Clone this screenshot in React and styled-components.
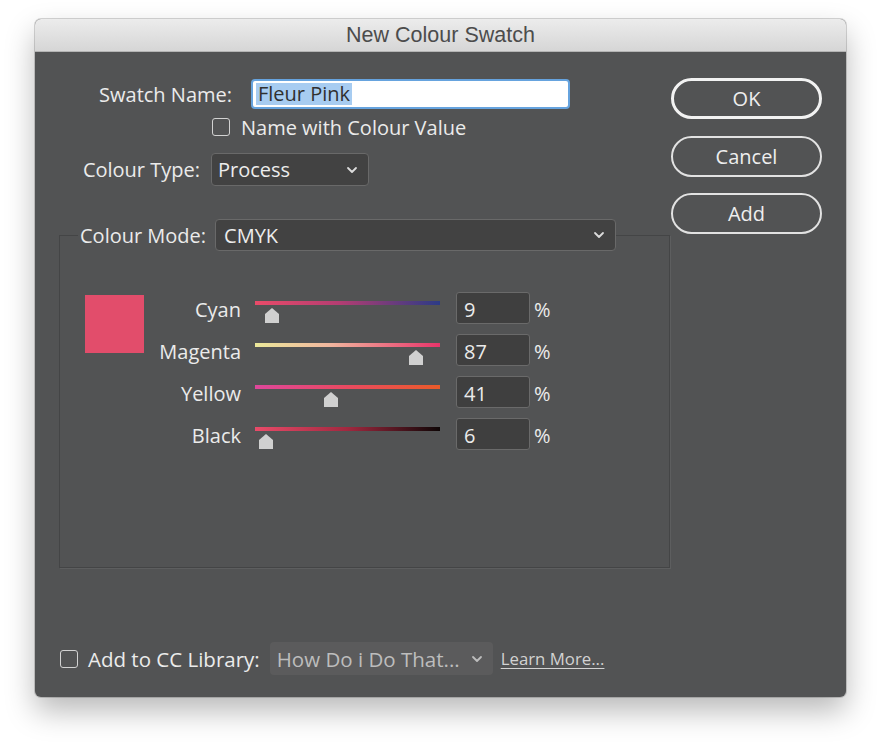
import React from 'react';
import styled, { createGlobalStyle } from 'styled-components';

const Global = createGlobalStyle`
  html, body { margin: 0; padding: 0; background: #ffffff; }
  body { font-family: "Open Sans", "DejaVu Sans", sans-serif; }
  * { box-sizing: border-box; }
`;

const Page = styled.div`
  width: 882px;
  height: 750px;
  padding: 19px 0 0 35px;
`;

const Window = styled.div`
  width: 811px;
  height: 678px;
  border-radius: 6px;
  overflow: hidden;
  display: flex;
  flex-direction: column;
  background: #525354;
  box-shadow: 0 0 0 1px rgba(0, 0, 0, 0.16), 0 14px 30px rgba(0, 0, 0, 0.28);
`;

const TitleBar = styled.div`
  height: 33px;
  flex: none;
  display: flex;
  align-items: center;
  justify-content: center;
  background: linear-gradient(#ececec, #d6d6d6);
  border-bottom: 1px solid #b4b4b4;
  font-family: "Liberation Sans", Arial, sans-serif;
  font-size: 21.5px;
  color: #4c4c4c;
`;

const Body = styled.div`
  flex: 1;
  display: grid;
  grid-template-columns: 636px 151px;
  grid-template-rows: auto auto 1fr auto;
  padding-right: 24px;
  color: #ebebeb;
  font-size: 20px;
`;

const TopForm = styled.div`
  grid-column: 1;
  grid-row: 1;
  padding-top: 27px;
  display: flex;
  flex-direction: column;
`;

const Row = styled.div`
  display: flex;
  align-items: center;
  gap: ${p => p.$gap || 0}px;
  margin-top: ${p => p.$mt || 0}px;
  padding-left: ${p => p.$pl || 0}px;
  height: ${p => p.$h}px;
`;

const Label = styled.span`
  width: ${p => p.$w}px;
  flex: none;
  text-align: right;
  white-space: nowrap;
`;

const TextField = styled.div`
  width: 319px;
  height: 30px;
  background: #ffffff;
  border: 2px solid #66a3de;
  border-radius: 4px;
  display: flex;
  align-items: center;
  padding-left: 3px;
  color: #303030;
`;

const Selection = styled.span`
  background: #a7ccf1;
  padding: 0 2px;
  line-height: 22px;
`;

const CheckBox = styled.span`
  width: 18px;
  height: 18px;
  flex: none;
  border: 1.5px solid #d2d2d2;
  border-radius: 3px;
`;

const Select = styled.div`
  width: ${p => p.$w}px;
  height: ${p => p.$h || 33}px;
  flex: none;
  display: flex;
  align-items: center;
  justify-content: space-between;
  padding: 0 10px 0 ${p => p.$pl || 6}px;
  background: ${p => (p.$disabled ? '#5b5b5c' : '#424242')};
  border: ${p => (p.$disabled ? 'none' : '1px solid #696969')};
  border-radius: 4px;
  color: ${p => (p.$disabled ? '#bdbdbd' : '#ececec')};
  white-space: nowrap;
  font-size: ${p => p.$fs || 20}px;
`;

const Chevron = ({ color = '#dcdcdc' }) => (
  <svg width="12" height="8" viewBox="0 0 12 8">
    <path d="M2 2 L6 6 L10 2" fill="none" stroke={color} strokeWidth="1.8" strokeLinecap="round" strokeLinejoin="round" />
  </svg>
);

const Buttons = styled.div`
  grid-column: 2;
  grid-row: 1 / span 2;
  align-self: start;
  margin-top: 26px;
  display: flex;
  flex-direction: column;
  gap: 16.5px;
`;

const Button = styled.div`
  height: 41px;
  border: ${p => (p.$default ? '3px solid #f2f2f2' : '2px solid #e2e2e2')};
  border-radius: 21px;
  display: flex;
  align-items: center;
  justify-content: center;
  color: #eeeeee;
`;

const Group = styled.fieldset`
  grid-column: 1;
  grid-row: 2;
  margin: 33px 0 0 24px;
  width: 611px;
  height: 349px;
  padding: 41px 0 0 25px;
  border: 1px solid #444546;
  box-shadow: 1px 1px 0 #5d5e5f;
  min-width: 0;
`;

const Legend = styled.legend`
  display: flex;
  align-items: center;
  gap: 9px;
  padding: 0 0 0 2px;
  margin-left: -7px;
`;

const Content = styled.div`
  display: flex;
  align-items: flex-start;
`;

const Swatch = styled.div`
  width: 59px;
  height: 58px;
  margin-top: 3px;
  background: #e24d6b;
  flex: none;
`;

const SliderGrid = styled.div`
  margin-left: 6px;
  display: grid;
  grid-template-columns: 91px 185px 74px auto;
  grid-auto-rows: 32px;
  column-gap: 14px;
  row-gap: 10px;
  align-items: center;
`;

const SliderLabel = styled.span`
  text-align: right;
  padding-top: 3px;
  white-space: nowrap;
`;

const Track = styled.div`
  position: relative;
  height: 32px;
  &::before {
    content: '';
    position: absolute;
    left: 0;
    right: 0;
    top: 9px;
    height: 4px;
    background: ${p => p.$bg};
  }
`;

const Thumb = styled.svg`
  position: absolute;
  top: 16px;
  width: 14px;
  height: 15px;
  margin-left: -7px;
`;

const NumBox = styled.div`
  width: 74px;
  height: 32px;
  margin-left: 2px;
  background: #3f3f3f;
  border: 1px solid #6a6a6a;
  border-radius: 3px;
  display: flex;
  align-items: center;
  padding: 3px 0 0 7px;
`;

const Percent = styled.span`
  margin-left: -8px;
  padding-top: 2px;
`;

const Footer = styled.div`
  grid-column: 1 / -1;
  grid-row: 4;
  margin-bottom: 22px;
  padding-left: 25px;
  display: flex;
  align-items: center;
  height: 33px;
`;

const FooterText = styled.span`
  margin: 0 10px;
  white-space: nowrap;
  font-size: 20.5px;
`;

const LearnMore = styled.span`
  margin-left: 8px;
  font-size: 16.8px;
  color: #d2d2d2;
  text-decoration: underline;
  text-underline-offset: 3px;
`;

const channels = [
  { name: 'Cyan', value: 9, bg: 'linear-gradient(90deg, #e94b69, #b53d72 45%, #2c3b86)' },
  { name: 'Magenta', value: 87, bg: 'linear-gradient(90deg, #ebe89a, #f1b79f 40%, #e8346a)' },
  { name: 'Yellow', value: 41, bg: 'linear-gradient(90deg, #de479b, #e94a60 50%, #ea5b2a)' },
  { name: 'Black', value: 6, bg: 'linear-gradient(90deg, #e94b69, #a1283f 50%, #0e0606)' },
];

export default function App() {
  return (
    <>
      <Global />
      <Page>
        <Window>
          <TitleBar>New Colour Swatch</TitleBar>
          <Body>
            <TopForm>
              <Row $h={30} $gap={19}>
                <Label $w={197}>Swatch Name:</Label>
                <TextField>
                  <Selection>Fleur Pink</Selection>
                </TextField>
              </Row>
              <Row $h={18} $mt={9} $pl={177} $gap={11}>
                <CheckBox />
                <span>Name with Colour Value</span>
              </Row>
              <Row $h={33} $mt={17} $gap={11}>
                <Label $w={165}>Colour Type:</Label>
                <Select $w={158}>
                  <span>Process</span>
                  <Chevron />
                </Select>
              </Row>
            </TopForm>

            <Buttons>
              <Button $default>OK</Button>
              <Button>Cancel</Button>
              <Button>Add</Button>
            </Buttons>

            <Group>
              <Legend>
                <span>Colour Mode:</span>
                <Select $w={401} $h={32} $pl={8}>
                  <span>CMYK</span>
                  <Chevron />
                </Select>
              </Legend>
              <Content>
                <Swatch />
                <SliderGrid>
                  {channels.map(c => (
                    <React.Fragment key={c.name}>
                      <SliderLabel>{c.name}</SliderLabel>
                      <Track $bg={c.bg}>
                        <Thumb viewBox="0 0 14 15" style={{ left: `${c.value}%` }}>
                          <polygon points="7,0 14,6 14,15 0,15 0,6" fill="#d0d0d0" />
                        </Thumb>
                      </Track>
                      <NumBox>{c.value}</NumBox>
                      <Percent>%</Percent>
                    </React.Fragment>
                  ))}
                </SliderGrid>
              </Content>
            </Group>

            <Footer>
              <CheckBox />
              <FooterText>Add to CC Library:</FooterText>
              <Select $w={223} $disabled $pl={7} $fs={20.5}>
                <span>How Do i Do That...</span>
                <Chevron color="#bdbdbd" />
              </Select>
              <LearnMore>Learn More...</LearnMore>
            </Footer>
          </Body>
        </Window>
      </Page>
    </>
  );
}
